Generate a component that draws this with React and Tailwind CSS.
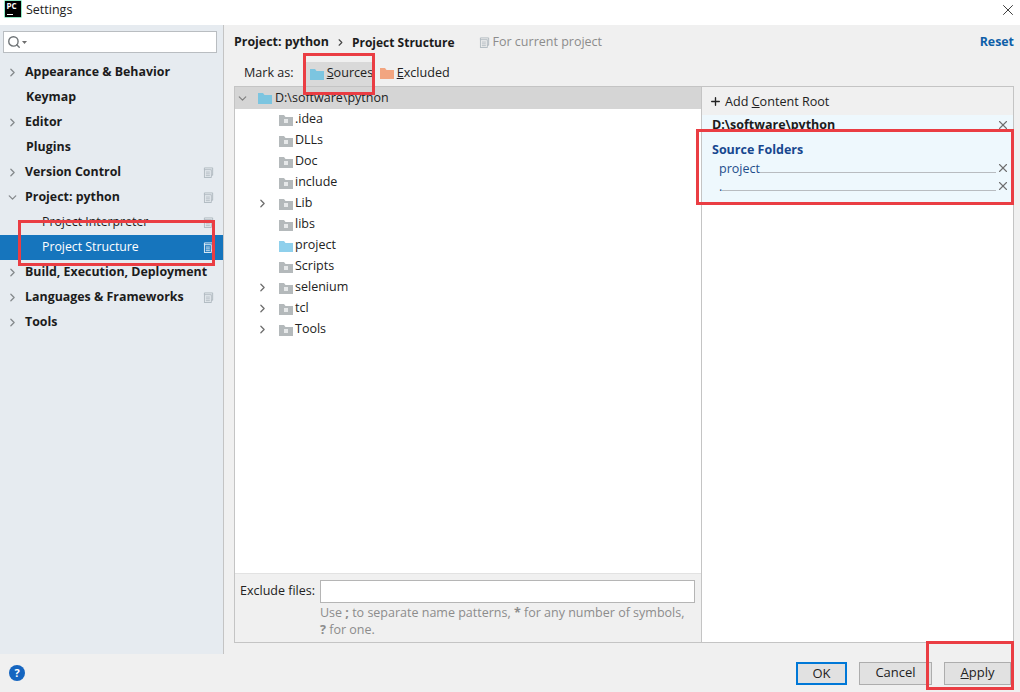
import { Search, ChevronRight, ChevronDown, Plus, X } from 'lucide-react';

const FONT = { fontFamily: '"Open Sans", "Noto Sans", sans-serif' };

function Folder({ color = '#b4b9bb', badge = false }) {
  return (
    <svg width="16" height="14" viewBox="0 0 16 14" className="shrink-0">
      <path d="M1 2h5l1.5 2H15v9H1z" fill={color} />
      {badge && <rect x="6" y="6" width="4" height="4" fill="#e6e8e9" />}
    </svg>
  );
}

function ProjectIcon({ white }) {
  return (
    <svg width="11" height="11" viewBox="0 0 12 12" fill="none" stroke={white ? '#ffffff' : '#a9b3ba'} strokeWidth="0.9" className="shrink-0">
      <path d="M1.5 3V1h9v8H9" />
      <rect x="1.5" y="3" width="7.5" height="8.5" />
      <path d="M3 5.5h4.5M3 7.5h4.5M3 9.5h4.5" />
    </svg>
  );
}

function Logo() {
  return (
    <div className="relative w-[16px] h-[16px] bg-black overflow-hidden shrink-0" style={{ boxShadow: '0 0 0 0.5px #21d789' }}>
      <span className="absolute left-[1.5px] top-[0px] text-[8px] leading-[10px] font-bold text-white">PC</span>
      <span className="absolute left-[2px] bottom-[2px] w-[6px] h-[1px] bg-white"></span>
    </div>
  );
}

const navItems = [
  { label: 'Appearance & Behavior', arrow: 'right' },
  { label: 'Keymap', pad: true },
  { label: 'Editor', arrow: 'right' },
  { label: 'Plugins', pad: true },
  { label: 'Version Control', arrow: 'right', project: true },
  { label: 'Project: python', arrow: 'down', project: true },
  { label: 'Project Interpreter', child: true, project: true },
  { label: 'Project Structure', child: true, project: true, selected: true },
  { label: 'Build, Execution, Deployment', arrow: 'right' },
  { label: 'Languages & Frameworks', arrow: 'right', project: true },
  { label: 'Tools', arrow: 'right' },
];

const treeItems = [
  { name: '.idea' },
  { name: 'DLLs' },
  { name: 'Doc' },
  { name: 'include' },
  { name: 'Lib', arrow: true },
  { name: 'libs' },
  { name: 'project', blue: true },
  { name: 'Scripts' },
  { name: 'selenium', arrow: true },
  { name: 'tcl', arrow: true },
  { name: 'Tools', arrow: true },
];

function Sidebar() {
  return (
    <div className="w-[224px] shrink-0 bg-[#e6ebf0] border-r border-[#c4c4c4] flex flex-col">
      <div className="mt-[6px] ml-[3px] mr-[6px] h-[22px] bg-white border border-[#b9bdc1] flex items-center pl-[3px] text-[#6f7477]">
        <Search size={14} strokeWidth={2.4} />
        <svg width="5" height="3" viewBox="0 0 5 3" className="ml-[1px]"><path d="M0 0h5L2.5 3z" fill="#6e6e6e" /></svg>
      </div>
      <div className="mt-[7px] flex flex-col">
        {navItems.map((item) => (
          <div
            key={item.label}
            className={`h-[25px] flex items-center pr-[9px] ${item.selected ? 'bg-[#1675bd] text-white' : 'text-[#1c1c1c]'}`}
          >
            <span className="w-[25px] shrink-0 flex justify-center text-[#85898c]">
              {item.arrow === 'right' && <ChevronRight size={13} strokeWidth={2.4} />}
              {item.arrow === 'down' && <ChevronDown size={13} strokeWidth={2.4} />}
            </span>
            <span className={`flex-1 whitespace-nowrap -mt-[1px] ${item.child ? 'pl-[17px] text-[12.3px] font-normal' : 'text-[12.4px] font-bold'} ${item.pad ? 'pl-[1px]' : ''}`}>
              {item.label}
            </span>
            {item.project && <ProjectIcon white={item.selected} />}
          </div>
        ))}
      </div>
    </div>
  );
}

function TreePanel() {
  return (
    <div className="w-[468px] shrink-0 border border-[#c4c4c4] flex flex-col">
      <div className="h-[22px] bg-[#d5d5d5] flex items-center text-[12.5px] text-[#222]">
        <span className="w-[22px] flex justify-center pr-[8px] text-[#808080]"><ChevronDown size={13} strokeWidth={2.2} /></span>
        <Folder color="#7cc5e0" />
        <span className="ml-[2px]">D:\software\python</span>
      </div>
      <div className="flex-1 bg-white flex flex-col text-[12.5px] text-[#222]">
        {treeItems.map((item) => (
          <div key={item.name} className="h-[21px] flex items-center">
            <span className="w-[43px] shrink-0 flex justify-end pr-[9px] text-[#6e6e6e]">
              {item.arrow && <ChevronRight size={13} strokeWidth={2.4} />}
            </span>
            <Folder color={item.blue ? '#8fd0ec' : '#b4b9bb'} badge={!item.blue} />
            <span className="ml-[1px]">{item.name}</span>
          </div>
        ))}
      </div>
      <div className="h-[69px] bg-[#f0f0f0] border-t border-[#e2e2e2] pl-[5px] pr-[6px] pt-[6px] flex text-[12.5px]">
        <span className="w-[80px] shrink-0 h-[23px] flex items-center text-[#222] whitespace-nowrap">Exclude files:</span>
        <div className="flex-1">
          <div className="h-[23px] bg-white border border-[#b5b5b5]"></div>
          <p className="mt-[1px] pr-[8px] leading-[17px] text-[#8c8c8c]">
            Use <b>;</b> to separate name patterns, <b>*</b> for any number of symbols, <b>?</b> for one.
          </p>
        </div>
      </div>
    </div>
  );
}

function FolderRow({ name }) {
  return (
    <div className="h-[18px] flex items-end pl-[17px] text-[#1f4e8c] text-[12.5px]">
      <span className="leading-[15px] -mb-[3px]">{name}</span>
      <span className="flex-1 border-b border-[#b8bcc0]"></span>
      <X size={14} strokeWidth={1.9} className="text-[#6e6e6e] shrink-0 -mb-[2px]" />
    </div>
  );
}

function ContentRoots() {
  return (
    <div className="flex-1 border-y border-r border-[#c4c4c4] bg-white flex flex-col">
      <div className="h-[28px] bg-[#f0f0f0] flex items-center pt-[1px] pl-[7px] text-[12.6px] text-[#222]">
        <Plus size={13} strokeWidth={2.5} />
        <span className="ml-[3px] mt-[1px]">Add <u>C</u>ontent Root</span>
      </div>
      <div className="h-[90px] bg-[#eef8fd] pl-[10px] pr-[3px]">
        <div className="h-[20px] flex items-center justify-between font-bold text-[12.5px] text-[#1c1c1c]">
          <span>D:\software\python</span>
          <X size={14} strokeWidth={1.9} className="text-[#6e6e6e]" />
        </div>
        <div className="mt-[6px] h-[18px] flex items-center font-bold text-[12.5px] text-[#17478f]">Source Folders</div>
        <div className="-ml-[10px] -mt-[4px]">
          <FolderRow name="project" />
          <FolderRow name="." />
        </div>
      </div>
    </div>
  );
}

function Footer() {
  return (
    <div className="h-[38px] bg-[#f0f0f0] flex items-center pl-[9px] pr-[9px] text-[13px] text-[#222]">
      <span className="w-[16px] h-[16px] rounded-full bg-[#1565c0] text-white text-[11px] font-bold flex items-center justify-center">?</span>
      <div className="ml-auto flex gap-[12px]">
        <button className="w-[51px] h-[23px] bg-[#e1e1e1] border-2 border-[#0078d7]">OK</button>
        <button className="w-[73px] h-[23px] bg-[#e1e1e1] border border-[#adadad]">Cancel</button>
        <button className="w-[67px] h-[23px] bg-[#e1e1e1] border border-[#adadad]"><u>A</u>pply</button>
      </div>
    </div>
  );
}

function Mark({ left, top, width, height }) {
  return (
    <div className="absolute border-[3px] border-[#ea3d43] pointer-events-none" style={{ left, top, width, height }}></div>
  );
}

export default function App() {
  return (
    <div className="relative w-[1020px] h-[692px] bg-[#f0f0f0] overflow-hidden" style={FONT}>
      <div className="h-[25px] bg-white flex items-start pt-[1px] pl-[5px] text-[12.5px] text-[#222]">
        <Logo />
        <span className="ml-[5px]">Settings</span>
        <X size={18} strokeWidth={1} className="ml-auto mr-[3px] text-black" />
      </div>
      <div className="h-[629px] flex">
        <Sidebar />
        <div className="flex-1 flex flex-col pl-[10px] pr-[6px]">
          <div className="h-[34px] flex items-center pt-[1px] text-[12.4px] text-[#1c1c1c]">
            <span className="font-bold">Project: python</span>
            <ChevronRight size={11} strokeWidth={2.4} className="mx-[6px] text-[#444]" />
            <span className="font-bold text-[12px]">Project Structure</span>
            <span className="ml-[24px] flex items-center gap-[3px] text-[#8c8c8c] font-normal text-[12.5px]">
              <ProjectIcon />
              For current project
            </span>
            <span className="ml-auto font-bold text-[#0f5fa8]">Reset</span>
          </div>
          <div className="h-[27px] flex items-center pt-[2px] pl-[10px] text-[12.6px] text-[#222]">
            <span>Mark as:</span>
            <div className="ml-[12px] h-[24px] w-[66px] bg-[#d9d9d9] flex items-center gap-[2px] pl-[3px]">
              <Folder color="#7cc5e0" />
              <span><u>S</u>ources</span>
            </div>
            <div className="ml-[7px] flex items-center gap-[2px]">
              <Folder color="#f2a580" />
              <span><u>E</u>xcluded</span>
            </div>
          </div>
          <div className="h-[557px] flex">
            <TreePanel />
            <ContentRoots />
          </div>
        </div>
      </div>
      <Footer />
      <Mark left={18} top={220} width={197} height={46} />
      <Mark left={303} top={53} width={72} height={42} />
      <Mark left={696} top={129} width={318} height={76} />
      <Mark left={926} top={641} width={88} height={49} />
    </div>
  );
}
